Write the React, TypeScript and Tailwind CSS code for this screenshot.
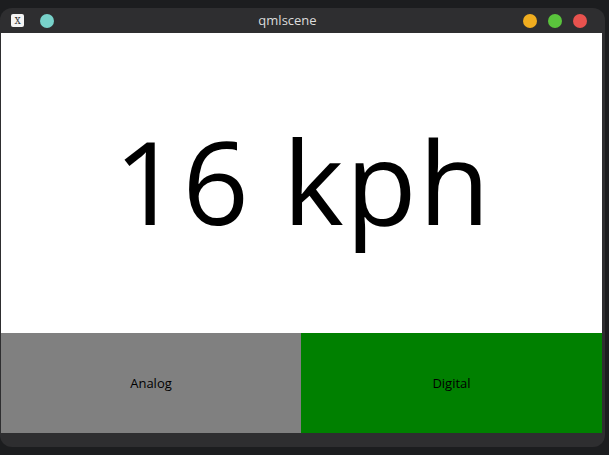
import React from "react";

const font = { fontFamily: '"Open Sans", "Noto Sans", sans-serif' };

const App: React.FC = () => {
  return (
    <div className="w-[609px] h-[455px] bg-[#1c1d1f] pt-[8px] overflow-hidden" style={font}>
      <div className="w-[605px] h-[439px] bg-[#2e2e30] rounded-[12px] flex flex-col">
        {/* title bar */}
        <div className="h-[25px] flex items-center relative">
          <div className="ml-[11px] w-[13px] h-[13px] rounded-[2px] bg-[#f4f4f4] flex items-center justify-center text-[10px] leading-none text-[#333] font-serif">
            X
          </div>
          <div className="ml-[16px] w-[14px] h-[14px] rounded-full bg-[#78d2ca]" />
          <div className="absolute inset-0 flex items-center justify-center text-[13px] text-[#dcdcdc] pointer-events-none pr-[30px]">
            qmlscene
          </div>
          <div className="ml-auto mr-[18px] flex items-center gap-[11px]">
            <div className="w-[14px] h-[14px] rounded-full bg-[#f0ad1f]" />
            <div className="w-[14px] h-[14px] rounded-full bg-[#5ac43c]" />
            <div className="w-[14px] h-[14px] rounded-full bg-[#e8524e]" />
          </div>
        </div>

        {/* content */}
        <div className="ml-[1px] w-[601px] flex flex-col">
          <div className="h-[300px] bg-white flex items-center justify-center pb-[6px] pl-[3px]">
            <span className="text-[116px] font-medium text-black tracking-[2px]">16 kph</span>
          </div>
          <div className="h-[100px] flex">
            <div className="w-[300px] bg-[#808080] flex items-center justify-center text-[13px] text-black pt-[1px]">
              Analog
            </div>
            <div className="flex-1 bg-[#008000] flex items-center justify-center text-[13px] text-black pt-[1px]">
              Digital
            </div>
          </div>
        </div>
      </div>
    </div>
  );
};

export default App;
